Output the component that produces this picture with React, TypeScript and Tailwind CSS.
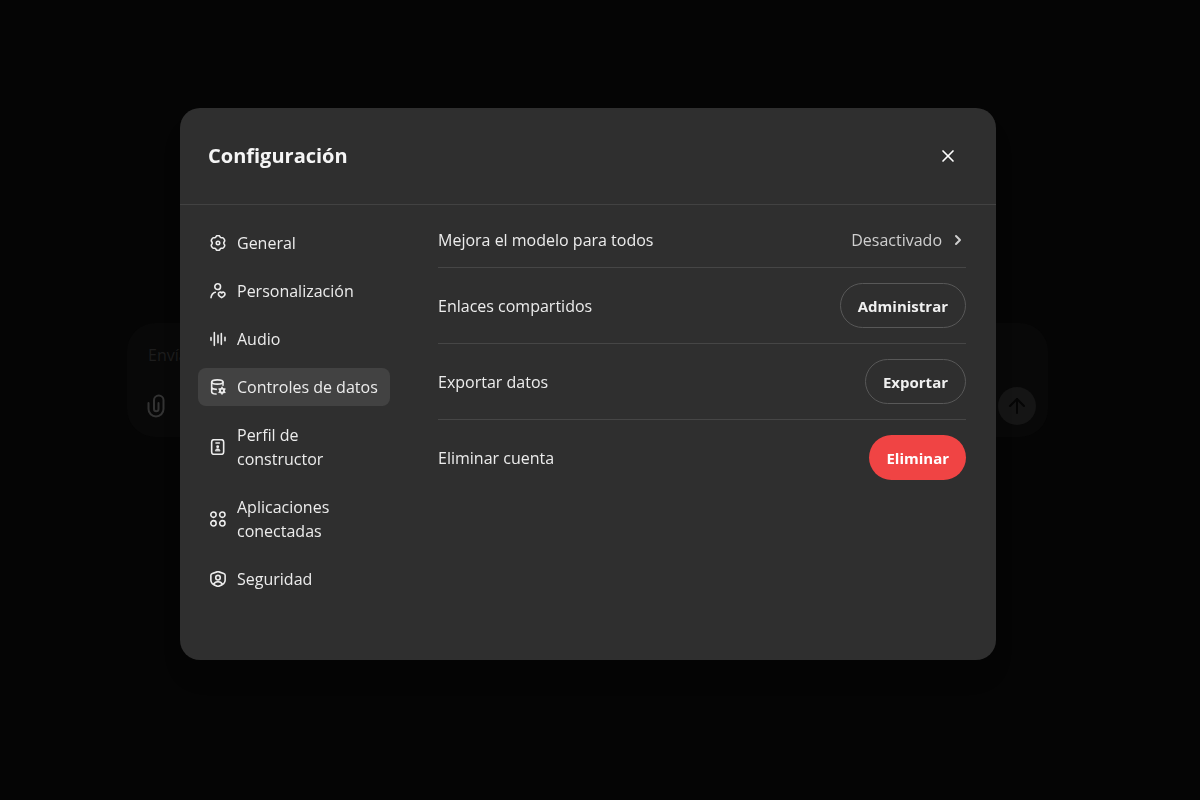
import type { ReactNode } from 'react';
import { ArrowUp, ChevronRight, X } from 'lucide-react';

type NavItem = {
  id: string;
  label: string;
  icon: ReactNode;
};

const navItems: NavItem[] = [
  {
    id: 'general',
    label: 'General',
    icon: (
      <>
        <path d="M9.500 1.800C10.100.6 13.900.6 14.500 1.800L15.300 3.200C15.700 3.900 16.300 4.200 17.100 4.200H19C20.400 4.200 22.600 7.900 21.900 9.100L21 10.700C20.600 11.500 20.600 12.500 21 13.300L21.900 14.900C22.600 16.100 20.400 19.800 19 19.800H17.100C16.300 19.800 15.700 20.100 15.300 20.800L14.500 22.200C13.900 23.400 10.100 23.400 9.500 22.200L8.700 20.800C8.300 20.100 7.700 19.800 6.900 19.800H5C3.600 19.800 1.400 16.100 2.100 14.900L3 13.300C3.400 12.500 3.400 11.500 3 10.700L2.100 9.100C1.400 7.900 3.600 4.200 5 4.200H6.900C7.700 4.200 8.300 3.900 8.700 3.200z" />
        <circle cx="12" cy="12" r="2.600" />
      </>
    ),
  },
  {
    id: 'personalization',
    label: 'Personalización',
    icon: (
      <>
        <circle cx="11.500" cy="5.500" r="4.300" />
        <path d="M1.500 22c.6-4.200 2.800-7.200 6.500-8.200" />
        <path d="M17.500 22c-2.800-1.500-5-3.300-5-5.500 0-2.900 3.500-3.800 5-1.500 1.500-2.300 5-1.400 5 1.500 0 2.200-2.200 4-5 5.500z" />
      </>
    ),
  },
  {
    id: 'audio',
    label: 'Audio',
    icon: <path d="M1.500 10v4M6.500 2.500v19M12 6.500v11M17 4v16M22.500 9.500v5" />,
  },
  {
    id: 'data',
    label: 'Controles de datos',
    icon: (
      <>
        <ellipse cx="11" cy="4.500" rx="8.500" ry="3.200" />
        <path d="M2.500 4.500v14.500c0 1.900 2.600 3.300 6.500 3.600M19.500 4.500v5M2.500 12c0 1.900 2.900 3.300 7 3.500" />
        <circle cx="18" cy="17.500" r="3" strokeWidth="2.800" />
        <path d="M18 12.500v1.500M18 21v1.500M13.700 15l1.300.8M21 19.200l1.300.8M13.700 20l1.300-.8M21 15.800l1.300-.8" />
      </>
    ),
  },
  {
    id: 'builder',
    label: 'Perfil de constructor',
    icon: (
      <>
        <rect x="2.500" y="1" width="18" height="22" rx="3.500" />
        <path d="M9 6h5" />
        <circle cx="11.500" cy="11.500" r="2.200" fill="currentColor" stroke="none" />
        <path d="M8 17.500c.3-2 1.600-3 3.500-3s3.200 1 3.500 3z" fill="currentColor" strokeWidth="1" />
      </>
    ),
  },
  {
    id: 'apps',
    label: 'Aplicaciones conectadas',
    icon: (
      <>
        <circle cx="5.200" cy="5.500" r="4" />
        <circle cx="18.500" cy="5.500" r="4" />
        <circle cx="5.200" cy="18.500" r="4" />
        <circle cx="18.500" cy="18.500" r="4" />
      </>
    ),
  },
  {
    id: 'security',
    label: 'Seguridad',
    icon: (
      <>
        <path d="M10.500 1.300 3.500 3.600c-1.300.4-2.200 1.500-2.200 2.800V14c0 4.700 4.300 7.500 10.700 9.200 6.400-1.700 10.700-4.500 10.700-9.200V6.400c0-1.300-.9-2.400-2.200-2.800l-7-2.300c-1-.3-2-.3-3 0z" />
        <circle cx="12" cy="10" r="3.400" />
        <path d="M5.500 19.500c1.400-2.300 3.500-3.500 6.500-3.500s5.100 1.200 6.500 3.500" />
      </>
    ),
  },
];

const activeItem = 'data';

const outlineButton = 'border border-[#585858] text-[#f0f0f0] hover:bg-[#3a3a3a]';
const dangerButton = 'bg-[#f04444] text-white hover:bg-[#dc3838]';

const actions = [
  { label: 'Enlaces compartidos', button: 'Administrar', style: outlineButton },
  { label: 'Exportar datos', button: 'Exportar', style: outlineButton },
  { label: 'Eliminar cuenta', button: 'Eliminar', style: dangerButton },
];

function NavIcon({ children }: { children: ReactNode }) {
  return (
    <svg
      className="size-4 shrink-0"
      viewBox="0 0 24 24"
      fill="none"
      stroke="currentColor"
      strokeWidth="2.4"
      strokeLinecap="round"
      strokeLinejoin="round"
      aria-hidden="true"
    >
      {children}
    </svg>
  );
}

function ClipIcon() {
  return (
    <svg
      className="size-6"
      viewBox="0 0 24 24"
      fill="none"
      stroke="currentColor"
      strokeWidth="2"
      strokeLinecap="round"
      aria-hidden="true"
    >
      <path d="M4.500 9v6a7.500 7.500 0 0 0 15 0V6.200a4.700 4.700 0 0 0-9.500 0V15a2.200 2.200 0 0 0 4.500 0V9" />
    </svg>
  );
}

function Composer() {
  return (
    <form className="flex w-full max-w-[921px] flex-col justify-between gap-5 rounded-[28px] bg-[#080808] px-[21px] pt-5 pb-3">
      <input
        type="text"
        aria-label="Mensaje"
        placeholder="Envía un mensaje"
        className="h-6 w-full bg-transparent text-base leading-6 placeholder:text-[#1d1d1d] focus:outline-none"
      />
      <div className="-mr-[9px] flex items-center justify-between">
        <button type="button" aria-label="Adjuntar archivo" className="-ml-1 text-[#333333]">
          <ClipIcon />
        </button>
        <button
          type="button"
          aria-label="Enviar"
          className="flex size-[38px] items-center justify-center rounded-full bg-[#151515] text-[#050505]"
        >
          <ArrowUp className="size-6" strokeWidth={2} aria-hidden="true" />
        </button>
      </div>
    </form>
  );
}

function SettingsDialog() {
  return (
    <div
      role="dialog"
      aria-modal="true"
      aria-labelledby="settings-title"
      className="w-full max-w-[816px] rounded-[20px] bg-[#2f2f2f] text-base leading-6 text-[#ececec] shadow-xl"
    >
      <header className="flex items-center justify-between border-b border-[#424242] px-7 py-8">
        <h2 id="settings-title" className="text-xl leading-8 font-bold text-[#f5f5f5]">
          Configuración
        </h2>
        <button type="button" aria-label="Cerrar" className="mr-1.5 p-1 text-white">
          <X className="size-5" strokeWidth={2} aria-hidden="true" />
        </button>
      </header>

      <div className="flex gap-12 pr-[30px] pl-[18px]">
        <nav className="flex w-48 shrink-0 flex-col gap-[10px] pt-[19px] pb-[62px]">
          {navItems.map((item) => (
            <button
              key={item.id}
              type="button"
              aria-current={item.id === activeItem ? 'page' : undefined}
              className={`flex items-center gap-[11px] rounded-lg py-[7px] pr-2 pl-3 text-left ${
                item.id === activeItem ? 'bg-[#424242]' : 'hover:bg-[#383838]'
              }`}
            >
              <NavIcon>{item.icon}</NavIcon>
              <span>{item.label}</span>
            </button>
          ))}
        </nav>

        <div className="flex-1 divide-y divide-[#464646] pt-2">
          <div className="flex items-center justify-between py-[15px]">
            <span>Mejora el modelo para todos</span>
            <button type="button" className="flex items-center gap-2 text-[#cfcfcf]">
              Desactivado
              <ChevronRight className="size-4" strokeWidth={3} aria-hidden="true" />
            </button>
          </div>
          {actions.map((action) => (
            <div key={action.button} className="flex items-center justify-between py-[15px]">
              <span>{action.label}</span>
              <button
                type="button"
                className={`flex h-[45px] items-center rounded-full px-[17px] text-[15px] font-bold ${action.style}`}
              >
                {action.button}
              </button>
            </div>
          ))}
        </div>
      </div>
    </div>
  );
}

export default function App() {
  return (
    <div className="min-h-screen bg-[#050505] font-['Segoe_UI','Open_Sans',sans-serif]">
      <main className="flex min-h-screen items-center justify-center pr-[25px] pb-10">
        <Composer />
      </main>
      <div className="fixed inset-0 flex items-center justify-center overflow-y-auto pr-6 pb-8">
        <SettingsDialog />
      </div>
    </div>
  );
}
